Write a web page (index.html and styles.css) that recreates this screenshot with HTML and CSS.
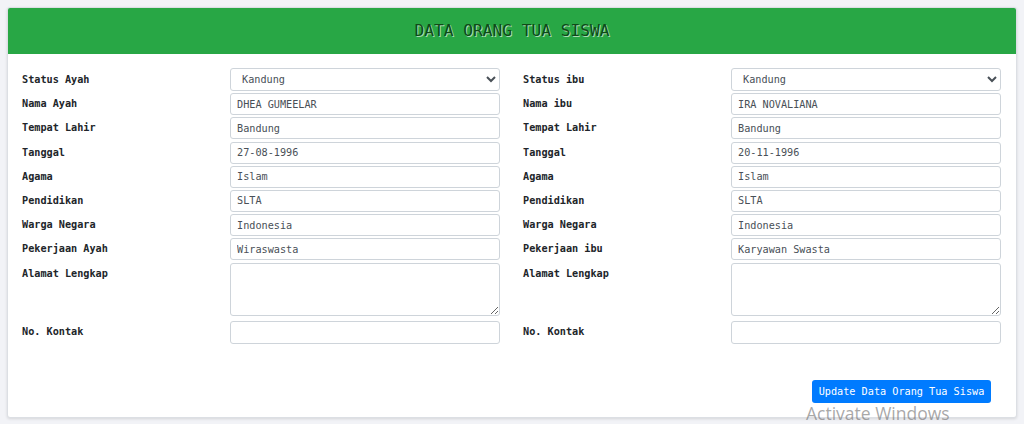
FILE: index.html
```html
<!DOCTYPE html>
<html lang="id">
<head>
<meta charset="utf-8">
<title>Data Orang Tua Siswa</title>
<link rel="stylesheet" href="styles.css">
</head>
<body>
<div class="card">
  <div class="card-header">
    <h1 class="card-title">DATA ORANG TUA SISWA</h1>
  </div>
  <form class="card-body">
    <div class="columns">
      <div class="fields">
        <label class="label first">Status Ayah</label>
        <select class="control select"><option>Kandung</option></select>
        <label class="label">Nama Ayah</label>
        <input class="control" value="DHEA GUMEELAR">
        <label class="label">Tempat Lahir</label>
        <input class="control" value="Bandung">
        <label class="label">Tanggal</label>
        <input class="control" value="27-08-1996">
        <label class="label">Agama</label>
        <input class="control" value="Islam">
        <label class="label">Pendidikan</label>
        <input class="control" value="SLTA">
        <label class="label">Warga Negara</label>
        <input class="control" value="Indonesia">
        <label class="label">Pekerjaan Ayah</label>
        <input class="control" value="Wiraswasta">
        <label class="label">Alamat Lengkap</label>
        <textarea class="control area"></textarea>
        <label class="label contact">No. Kontak</label>
        <input class="control contact">
      </div>
      <div class="fields">
        <label class="label first">Status ibu</label>
        <select class="control select"><option>Kandung</option></select>
        <label class="label">Nama ibu</label>
        <input class="control" value="IRA NOVALIANA">
        <label class="label">Tempat Lahir</label>
        <input class="control" value="Bandung">
        <label class="label">Tanggal</label>
        <input class="control" value="20-11-1996">
        <label class="label">Agama</label>
        <input class="control" value="Islam">
        <label class="label">Pendidikan</label>
        <input class="control" value="SLTA">
        <label class="label">Warga Negara</label>
        <input class="control" value="Indonesia">
        <label class="label">Pekerjaan ibu</label>
        <input class="control" value="Karyawan Swasta">
        <label class="label">Alamat Lengkap</label>
        <textarea class="control area"></textarea>
        <label class="label contact">No. Kontak</label>
        <input class="control contact">
      </div>
    </div>
    <div class="actions">
      <button type="button" class="btn">Update Data Orang Tua Siswa</button>
    </div>
  </form>
</div>
<div class="watermark">Activate Windows</div>
</body>
</html>
```

FILE: styles.css
```css
html, body {
  margin: 0;
  padding: 0;
}

body {
  background: #f2f3f7;
  font-family: "DejaVu Sans Mono", "Liberation Mono", monospace;
  font-size: 10.2px;
  color: #212529;
  height: 424px;
  overflow: hidden;
  position: relative;
}

.card {
  margin: 7px 7px 0 7px;
  height: 411px;
  box-sizing: border-box;
  background: #fff;
  border: 1px solid #dcdfe4;
  border-radius: 3px;
  box-shadow: 0 1px 3px rgba(0, 0, 0, 0.12);
  display: flex;
  flex-direction: column;
}

.card-header {
  background: #28a745;
  height: 46px;
  display: flex;
  align-items: center;
  justify-content: center;
  border-radius: 2px 2px 0 0;
}

.card-title {
  margin: 0 0 2px 0;
  font-size: 16.2px;
  font-weight: normal;
  color: #0f4a17;
  text-shadow: 1px 1px 0 #a8dcb2;
}

.card-body {
  padding: 14px 15px 14px 14px;
  display: flex;
  flex-direction: column;
  flex: 1;
}

.columns {
  display: grid;
  grid-template-columns: 1fr 1fr;
  column-gap: 23px;
}

.fields {
  display: grid;
  grid-template-columns: 208px 1fr;
  row-gap: 2.2px;
  align-items: start;
}

.label {
  font-weight: bold;
  line-height: 22px;
  white-space: nowrap;
}

.label.first {
  padding-top: 1px;
}

.control {
  box-sizing: border-box;
  height: 22px;
  margin: 0;
  border: 1px solid #ced4da;
  border-radius: 3px;
  background: #fff;
  font-family: inherit;
  font-size: 10.2px;
  color: #495057;
  padding: 0 6px;
  outline: none;
}

.select {
  height: 23px;
  padding-left: 7px;
}

.area {
  height: 53px;
  resize: vertical;
}

.contact {
  margin-top: 3px;
}

input.contact {
  height: 23px;
}

.actions {
  margin-top: auto;
  display: flex;
  justify-content: flex-end;
  padding-right: 10px;
}

.btn {
  height: 23px;
  width: 179px;
  padding: 0;
  border: none;
  border-radius: 3px;
  background: #007bff;
  color: #fff;
  font-family: inherit;
  font-size: 10.2px;
  cursor: pointer;
}

/* system activation notice drawn over the page corner */
.watermark {
  position: absolute;
  left: 806px;
  top: 405px;
  font-family: "Open Sans", "Liberation Sans", sans-serif;
  font-size: 17.5px;
  line-height: 1;
  color: rgba(110, 110, 110, 0.6);
  pointer-events: none;
}
```
